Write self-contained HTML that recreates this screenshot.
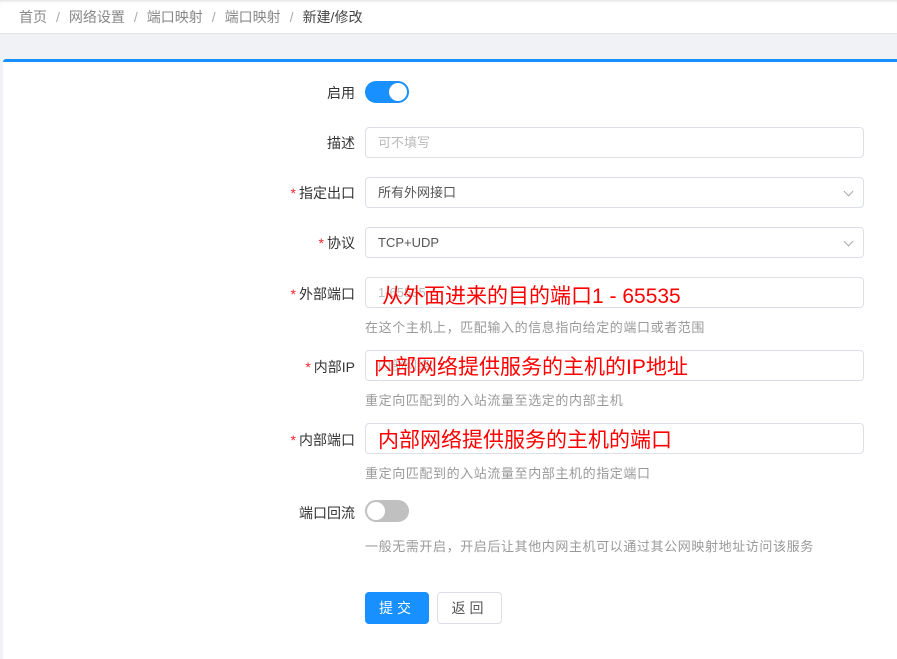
<!DOCTYPE html>
<html><head><meta charset="utf-8"><style>
*{box-sizing:border-box;margin:0;padding:0}
body{width:897px;height:640px;background:#f0f2f5;font-family:"Liberation Sans","Noto Sans CJK SC",sans-serif;font-size:13px;color:#333;position:relative;overflow:hidden}
.bc{position:absolute;left:0;top:0;width:897px;height:34px;background:#fff;border-bottom:1px solid #e6e6e6;padding:7px 0 0 19px;color:#888;font-size:14px;box-shadow:inset 0 3px 3px -2px #ddd}
.bc span.s{margin:0 9px;color:#aaa}
.bc .l{color:#444}
.card{position:absolute;left:3px;top:59px;width:894px;height:600px;background:#fff;border-top:3px solid #1890ff;border-radius:3px 0 0 0}
.lab{position:absolute;right:542px;font-size:14px;color:#333;white-space:nowrap}
.lab i{color:#f5222d;font-style:normal;margin-right:3px}
.in{position:absolute;left:365px;width:499px;height:31px;border:1px solid #dcdfe6;border-radius:4px;padding:0 12px;line-height:29px;color:#555;font-size:13px}
.in.ph{color:#bbb}
.arr{position:absolute;right:11px;top:10px;width:7px;height:7px;border-right:1px solid #aaa;border-bottom:1px solid #aaa;transform:rotate(45deg)}
.help{position:absolute;left:365px;font-size:13px;color:#999;letter-spacing:0.6px}
.tg{position:absolute;left:365px;width:44px;height:22px;border-radius:11px}
.tg b{position:absolute;top:2px;width:18px;height:18px;border-radius:50%;background:#fff}
.red{position:absolute;color:#f00;font-size:21px;white-space:nowrap}
.btn{position:absolute;top:592px;height:32px;border-radius:4px;font-size:14px;text-align:center;line-height:30px;letter-spacing:4px}
</style></head><body>
<div class="bc">首页<span class="s">/</span>网络设置<span class="s">/</span>端口映射<span class="s">/</span>端口映射<span class="s">/</span><span class="l">新建/修改</span></div>
<div class="card"></div>
<div class="lab" style="top:83px">启用</div>
<div class="tg" style="top:81px;background:#1890ff"><b style="left:24px"></b></div>
<div class="lab" style="top:133px">描述</div>
<div class="in ph" style="top:127px">可不填写</div>
<div class="lab" style="top:183px"><i>*</i>指定出口</div>
<div class="in" style="top:177px">所有外网接口<span class="arr"></span></div>
<div class="lab" style="top:233px"><i>*</i>协议</div>
<div class="in" style="top:227px">TCP+UDP<span class="arr"></span></div>
<div class="lab" style="top:284px"><i>*</i>外部端口</div>
<div class="in ph" style="top:277px">1-65535</div>
<div class="red" style="left:382px;top:280px">从外面进来的目的端口1 - 65535</div>
<div class="help" style="top:317px">在这个主机上，匹配输入的信息指向给定的端口或者范围</div>
<div class="lab" style="top:357px"><i>*</i>内部IP</div>
<div class="in ph" style="top:350px">内部网络</div>
<div class="red" style="left:374px;top:351px">内部网络提供服务的主机的IP地址</div>
<div class="help" style="top:390px">重定向匹配到的入站流量至选定的内部主机</div>
<div class="lab" style="top:430px"><i>*</i>内部端口</div>
<div class="in ph" style="top:423px"></div>
<div class="red" style="left:378px;top:424px">内部网络提供服务的主机的端口</div>
<div class="help" style="top:463px">重定向匹配到的入站流量至内部主机的指定端口</div>
<div class="lab" style="top:503px">端口回流</div>
<div class="tg" style="top:500px;background:#c0c0c0"><b style="left:2px"></b></div>
<div class="help" style="top:536px">一般无需开启，开启后让其他内网主机可以通过其公网映射地址访问该服务</div>
<div class="btn" style="left:365px;width:64px;background:#1890ff;color:#fff;border:1px solid #1890ff">提交</div>
<div class="btn" style="left:437px;width:65px;background:#fff;color:#555;border:1px solid #dcdfe6">返回</div>
</body></html>
